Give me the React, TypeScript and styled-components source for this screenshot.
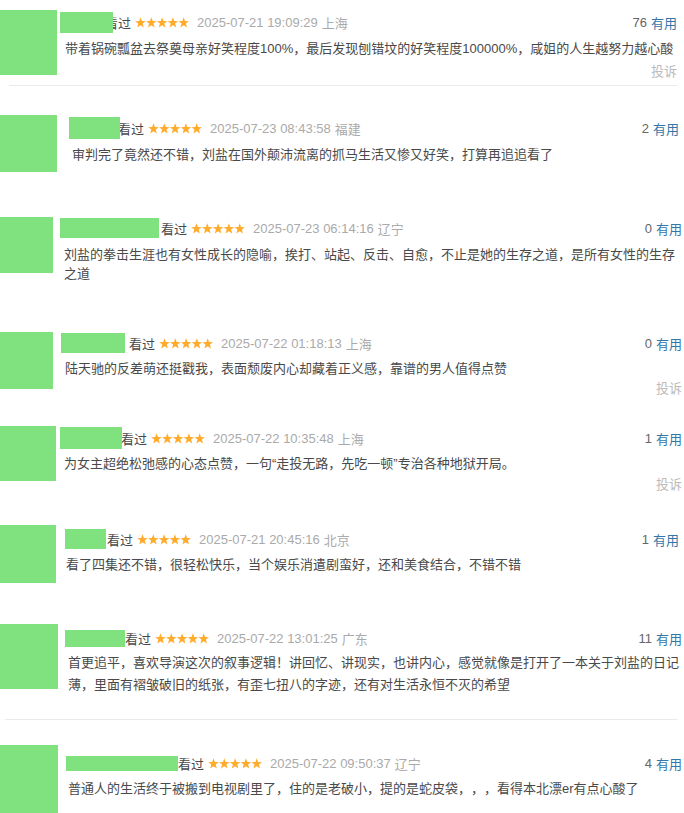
import React from 'react';
import styled, { createGlobalStyle } from 'styled-components';

const GlobalStyle = createGlobalStyle`
  html, body {
    margin: 0;
    padding: 0;
    background: #fff;
  }
  body {
    font-family: "Liberation Sans", Arial, "Noto Sans CJK SC", sans-serif;
    color: #494949;
    text-spacing-trim: space-all;
  }
`;

const List = styled.div`
  width: 684px;
  padding-top: 10px;
`;

const Item = styled.div<{ $h: number }>`
  display: flex;
  align-items: flex-start;
  height: ${(p) => p.$h}px;
`;

const Avatar = styled.div<{ $w: number; $h: number }>`
  flex: none;
  width: ${(p) => p.$w}px;
  height: ${(p) => p.$h}px;
  background: #80e27e;
`;

const Body = styled.div<{ $gap: number; $pr: number; $top: number }>`
  flex: 1;
  min-width: 0;
  margin-left: ${(p) => p.$gap}px;
  padding-right: ${(p) => p.$pr}px;
  padding-top: ${(p) => p.$top}px;
`;

const Header = styled.div`
  display: flex;
  align-items: center;
  height: 22px;
  font-size: 13px;
  white-space: nowrap;
`;

const NameBlock = styled.div<{ $w: number; $h: number }>`
  position: relative;
  z-index: 1;
  flex: none;
  width: ${(p) => p.$w}px;
  height: ${(p) => p.$h}px;
  background: #80e27e;
`;

const Watched = styled.span<{ $gap: number }>`
  margin-left: ${(p) => p.$gap}px;
  color: #494949;
`;

const StarsWrap = styled.span`
  display: inline-flex;
  margin-left: 4px;
`;

const Time = styled.span`
  margin-left: 8px;
  font-size: 13px;
  color: #aaa;
`;

const Loc = styled.span`
  margin-left: 4px;
  font-size: 13px;
  color: #aaa;
`;

const Votes = styled.span`
  margin-left: auto;
  color: #666;
`;

const Useful = styled.span`
  margin-left: 4px;
  color: #37a;
`;

const Content = styled.p<{ $indent: number; $mt: number; $lh: number }>`
  margin: ${(p) => p.$mt}px 0 0 ${(p) => p.$indent}px;
  font-size: 13px;
  line-height: ${(p) => p.$lh}px;
  color: #494949;
  text-spacing-trim: space-all;
`;

const Report = styled.div<{ $mt: number }>`
  margin-top: ${(p) => p.$mt}px;
  text-align: right;
  font-size: 13px;
  line-height: 20px;
  color: #bbb;
`;

const Divider = styled.div<{ $left: number; $right: number; $mb: number }>`
  height: 1px;
  background: #eaeaea;
  margin: 0 ${(p) => p.$right}px ${(p) => p.$mb}px ${(p) => p.$left}px;
`;

const starPts =
  '5.5,0.3 6.85,4.04 10.83,4.17 7.69,6.61 8.79,10.43 5.5,8.2 2.21,10.43 3.31,6.61 0.17,4.17 4.15,4.04';

const Stars = () => (
  <StarsWrap>
    <svg width="54" height="11" viewBox="0 0 54 11">
      {[0, 1, 2, 3, 4].map((i) => (
        <polygon key={i} points={starPts} fill="#ffac2d" transform={`translate(${i * 10.8} 0)`} />
      ))}
    </svg>
  </StarsWrap>
);

type Review = {
  aw: number;
  ah: number;
  h: number;
  gap: number;
  nw: number;
  nh: number;
  kgap: number;
  top: number;
  indent: number;
  mt: number;
  lh: number;
  pr: number;
  votes: number;
  date: string;
  loc: string;
  text: string;
  report?: number;
  divider?: { left: number; right: number; mb: number };
};

const reviews: Review[] = [
  {
    aw: 57, ah: 65, h: 75, gap: 3, nw: 53, nh: 21, kgap: -8, top: 1, indent: 5, mt: 6, lh: 20, pr: 7,
    votes: 76, date: '2025-07-21 19:09:29', loc: '上海',
    text: '带着锅碗瓢盆去祭奠母亲好笑程度100%，最后发现刨错坟的好笑程度100000%，咸姐的人生越努力越心酸',
    report: 3, divider: { left: 9, right: 7, mb: 29 },
  },
  {
    aw: 57, ah: 57, h: 102, gap: 12, nw: 51, nh: 22, kgap: -2, top: 2, indent: 3, mt: 6, lh: 20, pr: 5,
    votes: 2, date: '2025-07-23 08:43:58', loc: '福建',
    text: '审判完了竟然还不错，刘盐在国外颠沛流离的抓马生活又惨又好笑，打算再追追看了',
  },
  {
    aw: 53, ah: 56, h: 115, gap: 7, nw: 99, nh: 20, kgap: 2, top: 0, indent: 4, mt: 6, lh: 19, pr: 2,
    votes: 0, date: '2025-07-23 06:14:16', loc: '辽宁',
    text: '刘盐的拳击生涯也有女性成长的隐喻，挨打、站起、反击、自愈，不止是她的生存之道，是所有女性的生存之道',
  },
  {
    aw: 53, ah: 57, h: 94, gap: 8, nw: 64, nh: 20, kgap: 4, top: 0, indent: 4, mt: 5, lh: 20, pr: 2,
    votes: 0, date: '2025-07-22 01:18:13', loc: '上海',
    text: '陆天驰的反差萌还挺戳我，表面颓废内心却藏着正义感，靠谱的男人值得点赞',
    report: 0,
  },
  {
    aw: 56, ah: 55, h: 99, gap: 4, nw: 62, nh: 22, kgap: -1, top: 1, indent: 4, mt: 5, lh: 20, pr: 2,
    votes: 1, date: '2025-07-22 10:35:48', loc: '上海',
    text: '为女主超绝松弛感的心态点赞，一句“走投无路，先吃一顿”专治各种地狱开局。',
    report: 1,
  },
  {
    aw: 56, ah: 58, h: 99, gap: 9, nw: 41, nh: 20, kgap: 1, top: 3, indent: 1, mt: 5, lh: 20, pr: 5,
    votes: 1, date: '2025-07-21 20:45:16', loc: '北京',
    text: '看了四集还不错，很轻松快乐，当个娱乐消遣剧蛮好，还和美食结合，不错不错',
  },
  {
    aw: 58, ah: 65, h: 95, gap: 7, nw: 60, nh: 17, kgap: 0, top: 3, indent: 3, mt: 3, lh: 22, pr: 2,
    votes: 11, date: '2025-07-22 13:01:25', loc: '广东',
    text: '首更追平，喜欢导演这次的叙事逻辑！讲回忆、讲现实，也讲内心，感觉就像是打开了一本关于刘盐的日记薄，里面有褶皱破旧的纸张，有歪七扭八的字迹，还有对生活永恒不灭的希望',
    divider: { left: 5, right: 7, mb: 25 },
  },
  {
    aw: 58, ah: 70, h: 68, gap: 8, nw: 112, nh: 15, kgap: 0, top: 7, indent: 2, mt: 5, lh: 20, pr: 2,
    votes: 4, date: '2025-07-22 09:50:37', loc: '辽宁',
    text: '普通人的生活终于被搬到电视剧里了，住的是老破小，提的是蛇皮袋，，，看得本北漂er有点心酸了',
  },
];

export default function App() {
  return (
    <>
      <GlobalStyle />
      <List>
        {reviews.map((r, i) => (
          <React.Fragment key={i}>
            <Item $h={r.h}>
              <Avatar $w={r.aw} $h={r.ah} />
              <Body $gap={r.gap} $pr={r.pr} $top={r.top}>
                <Header>
                  <NameBlock $w={r.nw} $h={r.nh} />
                  <Watched $gap={r.kgap}>看过</Watched>
                  <Stars />
                  <Time>{r.date}</Time>
                  <Loc>{r.loc}</Loc>
                  <Votes>{r.votes}</Votes>
                  <Useful>有用</Useful>
                </Header>
                <Content $indent={r.indent} $mt={r.mt} $lh={r.lh}>
                  {r.text}
                </Content>
                {r.report !== undefined && <Report $mt={r.report}>投诉</Report>}
              </Body>
            </Item>
            {r.divider && <Divider $left={r.divider.left} $right={r.divider.right} $mb={r.divider.mb} />}
          </React.Fragment>
        ))}
      </List>
    </>
  );
}
